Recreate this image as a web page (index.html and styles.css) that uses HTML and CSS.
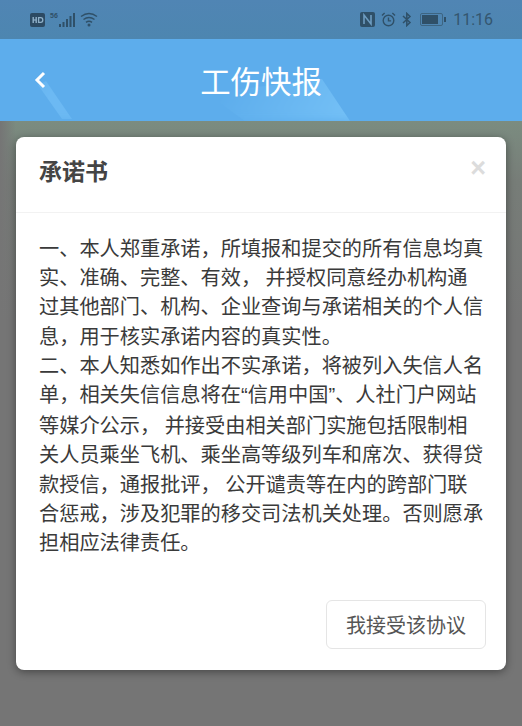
FILE: index.html
```html
<!DOCTYPE html>
<html lang="zh-CN">
<head>
  <meta charset="UTF-8">
  <meta name="viewport" content="width=device-width, initial-scale=1.0">
  <title>工伤快报</title>
  <link rel="stylesheet" href="styles.css">
</head>
<body>
  <div class="status-bar">
    <div class="status-left">
      <svg class="icon-hd" width="15" height="14" viewBox="0 0 15 14">
        <rect x="0" y="0" width="15" height="14" rx="2" fill="#2c4a63"/>
        <rect x="2.5" y="4" width="1.4" height="6" fill="#8fb0c8"/>
        <rect x="5.5" y="4" width="1.4" height="6" fill="#8fb0c8"/>
        <rect x="3" y="6.4" width="3" height="1.2" fill="#8fb0c8"/>
        <path d="M8.6 4.6h2.2q2 0 2 2.4t-2 2.4H8.6z" fill="none" stroke="#8fb0c8" stroke-width="1.3"/>
      </svg>
      <span class="net-label">56</span>
      <svg width="16" height="14" viewBox="0 0 16 14">
        <rect x="0" y="11" width="2" height="3" fill="#2f5068"/>
        <rect x="3.5" y="9" width="2" height="5" fill="#2f5068"/>
        <rect x="7" y="6" width="2" height="8" fill="#2f5068"/>
        <rect x="10.5" y="3" width="2" height="11" fill="#2f5068"/>
        <rect x="14" y="0" width="2" height="14" fill="#2f5068"/>
      </svg>
      <svg class="icon-wifi" width="18" height="15" viewBox="0 0 18 15">
        <path d="M1 4.5Q9 -1.5 17 4.5M3.5 7.5Q9 3.5 14.5 7.5M6 10.4Q9 8.2 12 10.4" fill="none" stroke="#2f5068" stroke-width="1.5"/>
        <circle cx="9" cy="13" r="1.5" fill="#2f5068"/>
      </svg>
    </div>
    <div class="status-right">
      <svg width="15" height="15" viewBox="0 0 15 15">
        <rect x="0" y="0" width="15" height="15" rx="2" fill="#2f5068"/>
        <path d="M4 12V3l7 9V3" fill="none" stroke="#6d9cc0" stroke-width="1.6"/>
      </svg>
      <svg width="15" height="15" viewBox="0 0 15 15">
        <circle cx="7.5" cy="8.5" r="5.3" fill="none" stroke="#2f5068" stroke-width="1.4"/>
        <path d="M7.5 5.5v3.4h2.6M1 3.5L3.6 1M14 3.5L11.4 1" fill="none" stroke="#2f5068" stroke-width="1.4"/>
      </svg>
      <svg class="icon-bt" width="10" height="15" viewBox="0 0 10 15">
        <path d="M1 4l7 6.5L4.8 13.6V1.4L8 4.5 1 11" fill="none" stroke="#2f5068" stroke-width="1.5"/>
      </svg>
      <svg class="icon-battery" width="26" height="13" viewBox="0 0 26 13">
        <rect x="0.5" y="0.5" width="22" height="12" rx="1.5" fill="none" stroke="#3d6582"/>
        <rect x="2" y="2" width="16" height="9" fill="#2f5068"/>
        <rect x="24" y="4" width="2" height="5" fill="#2f5068"/>
      </svg>
      <span class="clock">11:16</span>
    </div>
  </div>

  <header class="app-bar">
    <span class="streak streak-back"></span>
    <span class="streak streak-title"></span>
    <svg class="back" width="12" height="18" viewBox="0 0 12 18">
      <path d="M10 2L3 9l7 7" fill="none" stroke="#fff" stroke-width="3"/>
    </svg>
    <h1>工伤快报</h1>
  </header>

  <main class="backdrop">
    <div class="modal">
      <div class="modal-head">
        <h2>承诺书</h2>
        <span class="close">×</span>
      </div>
      <div class="modal-body">
        <p>一、本人郑重承诺，所填报和提交的所有信息均真<br>实、准确、完整、有效， 并授权同意经办机构通<br>过其他部门、机构、企业查询与承诺相关的个人信<br>息，用于核实承诺内容的真实性。<br>二、本人知悉如作出不实承诺，将被列入失信人名<br>单，相关失信信息将在<span class="quote">“</span>信用中国<span class="quote">”</span>、人社门户网站<br>等媒介公示， 并接受由相关部门实施包括限制相<br>关人员乘坐飞机、乘坐高等级列车和席次、获得贷<br>款授信，通报批评， 公开谴责等在内的跨部门联<br>合惩戒，涉及犯罪的移交司法机关处理。否则愿承<br>担相应法律责任。</p>
      </div>
      <div class="modal-foot">
        <button class="accept">我接受该协议</button>
      </div>
    </div>
  </main>
</body>
</html>
```

FILE: styles.css
```css
html, body {
  margin: 0;
  height: 100%;
}

body {
  width: 522px;
  height: 726px;
  overflow: hidden;
  display: flex;
  flex-direction: column;
  font-family: "Noto Sans CJK SC", "Noto Sans", sans-serif;
  background-color: #757575;
}

.status-bar {
  height: 39px;
  flex: none;
  display: flex;
  justify-content: space-between;
  align-items: center;
  padding: 0 29px 0 30px;
  background: linear-gradient(180deg, #5085b4, #4d86b0);
  color: #34566f;
}

.status-left,
.status-right {
  display: flex;
  align-items: center;
  gap: 5px;
}

.status-right {
  gap: 6px;
}

.icon-battery {
  margin-left: 2px;
}

.net-label {
  font-family: "Liberation Sans", sans-serif;
  font-size: 7px;
  font-weight: bold;
  margin: -9px -4px 0 0;
  color: #2f5068;
}

.clock {
  font-family: Roboto, sans-serif;
  font-size: 16px;
  color: #34566f;
  margin-left: 1px;
}

.app-bar {
  height: 82px;
  flex: none;
  display: flex;
  align-items: center;
  justify-content: center;
  position: relative;
  overflow: hidden;
  background: #5dadec;
}

.app-bar h1 {
  margin: 0;
  position: relative;
  font-size: 30.4px;
  font-weight: 400;
  line-height: 1;
  color: #fff;
}

.back {
  position: absolute;
  left: 34px;
  top: 32px;
}

.streak {
  position: absolute;
  inset: 0;
  filter: blur(5px);
}

.streak-title {
  background: linear-gradient(120deg, #5dadec 220px, #74c0f6 340px);
  clip-path: polygon(205px 54px, 322px 40px, 350px 82px, 245px 82px);
}

.streak-back {
  background: linear-gradient(120deg, #5dadec 30px, #6cb9f3 70px);
  clip-path: polygon(38px 46px, 46px 42px, 72px 80px, 62px 80px);
}

.backdrop {
  flex: 1;
  min-height: 0;
  padding: 16px 16px 56px;
  display: flex;
  background:
    linear-gradient(90deg, #757575 0, rgba(117, 117, 117, 0) 16px),
    linear-gradient(180deg, #7b8c80 0, #777d78 60px, #757575 200px);
}

.modal {
  flex: 1;
  min-width: 0;
  display: flex;
  flex-direction: column;
  background: #fff;
  border-radius: 8px;
  box-shadow: 0 2px 8px rgba(0, 0, 0, 0.4);
}

.modal-head {
  height: 76px;
  flex: none;
  box-sizing: border-box;
  display: flex;
  justify-content: space-between;
  align-items: flex-start;
  padding: 15px 20px 0 23px;
  border-bottom: 1px solid #f2f2f2;
}

.modal-head h2 {
  margin: 0;
  font-size: 23px;
  font-weight: 700;
  line-height: 36px;
  color: #444;
}

.close {
  font-family: "Liberation Sans", sans-serif;
  font-size: 27px;
  font-weight: 700;
  line-height: 28px;
  margin-top: 2px;
  color: #dcdcdc;
}

.modal-body {
  flex: 1;
  padding: 20px 20px 0 23px;
}

.modal-body p {
  margin: 0;
  font-size: 20.2px;
  line-height: 29.2px;
  white-space: nowrap;
  color: #3a3a3a;
}

.quote {
  font-family: "Liberation Sans", sans-serif;
}

.modal-foot {
  flex: none;
  display: flex;
  justify-content: flex-end;
  padding: 0 20px 21px 0;
}

.accept {
  width: 160px;
  height: 49px;
  padding: 0;
  background: #fff;
  border: 1px solid #e5e5e5;
  border-radius: 6px;
  font-family: inherit;
  font-size: 20px;
  color: #555;
}
```
